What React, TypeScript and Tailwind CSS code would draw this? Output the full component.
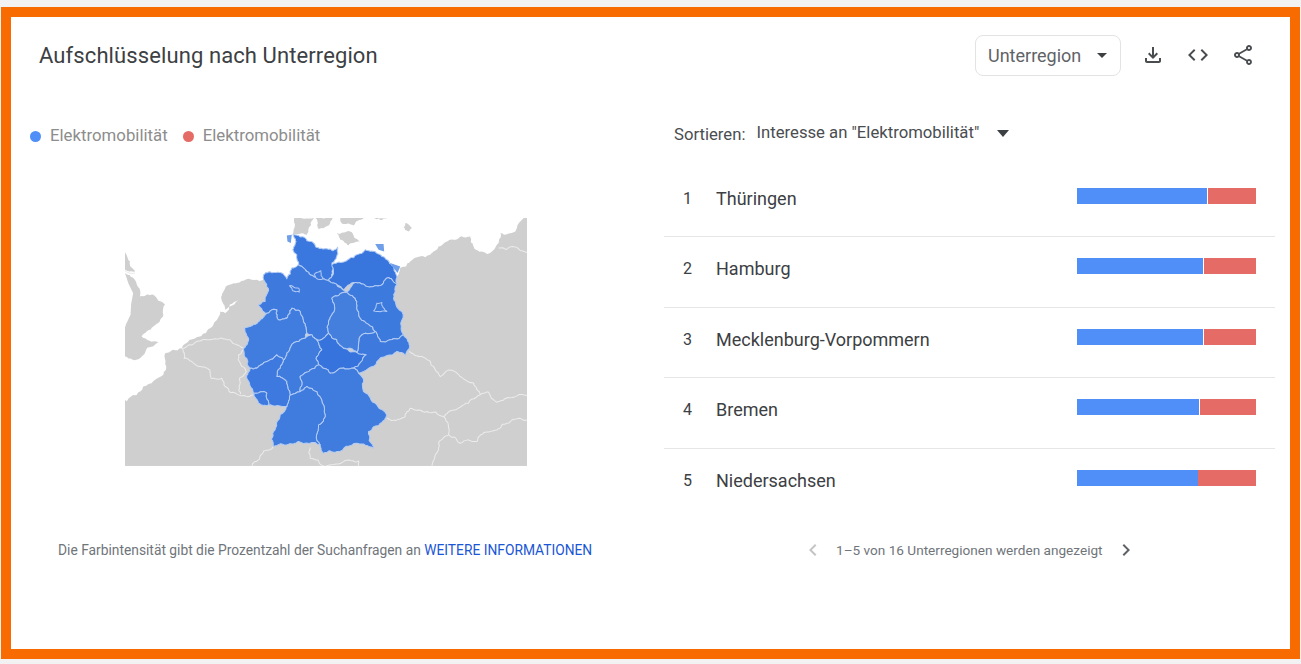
import { MdArrowDropDown, MdChevronLeft, MdChevronRight, MdCode, MdOutlineFileDownload, MdOutlineShare } from "react-icons/md";

const regions = [
  { name: "Thüringen", blue: 130, red: 48 },
  { name: "Hamburg", blue: 126, red: 52 },
  { name: "Mecklenburg-Vorpommern", blue: 126, red: 52 },
  { name: "Bremen", blue: 122, red: 56 },
  { name: "Niedersachsen", blue: 121, red: 58 },
];

const states = [
  { fill: "#3a77de", d: "M548 90L565 92L580 97L590 108L605 110L620 128L650 132L668 138L682 127L680 155L665 175L668 195L665 215L655 228L630 222L610 215L590 200L575 185L565 180L560 150L548 135L555 118Z" },
  { fill: "#3875dd", d: "M665 180L700 172L720 160L740 150L765 135L795 140L815 155L830 165L850 185L860 215L860 240L835 218L815 240L790 245L760 238L735 233L700 255L680 240L655 228L665 215Z" },
  { fill: "#3e7ade", d: "M460 210L495 203L520 208L530 222L545 190L565 180L590 200L610 215L630 222L655 228L680 240L708 262L665 280L672 320L655 350L655 385L620 405L605 390L590 385L580 350L570 320L545 310L530 340L505 345L500 315L470 325L445 300L465 290L472 265L470 240Z" },
  { fill: "#407dde", d: "M402 370L445 350L470 325L500 315L505 345L530 340L545 310L570 320L580 350L590 385L585 400L565 410L545 420L530 445L520 465L500 450L470 470L440 490L420 490L410 460L400 435L415 400Z" },
  { fill: "#3f7cde", d: "M585 400L605 390L620 405L635 435L618 460L625 480L600 495L570 515L570 560L540 570L530 530L500 515L520 465L530 445L545 420L565 410Z" },
  { fill: "#3673dc", d: "M620 405L655 385L680 405L700 430L745 445L768 450L730 490L690 490L660 505L625 480L618 460L635 435Z" },
  { fill: "#447fde", d: "M665 280L708 262L740 290L750 340L795 380L750 395L740 442L700 430L680 405L655 385L655 350L672 320Z" },
  { fill: "#3d7ade", d: "M708 262L735 233L760 238L790 245L815 240L835 218L860 240L850 280L875 320L880 390L840 405L810 410L795 380L750 340L740 290Z" },
  { fill: "#3e7ade", d: "M750 395L795 380L810 410L840 405L880 390L897 430L885 452L860 440L800 470L745 505L730 490L768 450L740 442Z" },
  { fill: "#3f7cde", d: "M570 515L600 495L625 480L660 505L690 490L730 490L745 505L760 560L800 600L830 630L810 655L775 680L790 730L740 715L680 740L640 745L630 720L625 660L645 630L620 560L590 545L570 560Z" },
  { fill: "#3f7cde", d: "M540 570L570 560L590 545L620 560L645 630L625 660L630 720L565 710L535 718L490 725L490 680L510 630L530 605Z" },
  { fill: "#3d79de", d: "M420 490L440 490L470 470L500 450L520 465L500 515L530 530L540 570L530 605L475 600L470 565L430 565L410 520Z" },
  { fill: "#3d79de", d: "M430 565L470 565L475 600L445 595Z" },
  // Bremen, Berlin, Hamburg
  { fill: "#3e7ade", d: "M538 243L565 250L567 262L548 258Z" },
  { fill: "#3d7ade", d: "M790 318L800 295L815 293L830 320Z" },
  { fill: "#3e7ade", d: "M612 208L632 198L638 222L620 222Z" },
];

const borders = [
  "M215 430L222 460L245 470L270 485L300 495L303 520L335 520L345 545L385 570L430 570",
  "M215 430L260 410L300 405L330 400L360 405L380 420L400 430",
  "M400 435L385 450L408 500L388 520L392 568",
  "M897 440L925 455L960 470L975 495L990 515L1015 495L1040 505L1065 525L1090 535L1110 570",
  "M830 640L860 645L885 635L900 610L950 620L1000 635L1030 615L1060 600L1110 570",
  "M1110 570L1135 562L1160 592L1190 578L1250 572",
  "M1000 635L1015 690L1050 715L1100 710L1110 690L1160 675L1200 650L1250 645",
  "M1015 690L985 715L975 750L965 783",
  "M490 725L460 738L445 765L425 783",
  "M600 728L600 760L640 783L700 770L745 768L745 783",
  "M1165 130L1250 143",
  "M45 197L75 205",
];

const sea =
  "M45 40L1240 40L1215 80L1170 85L1165 115L1130 148L1090 125L1080 95L1030 105L985 125L960 150L900 170L870 190L860 215L460 225L440 225L380 235L345 250L335 285L345 315L385 285L345 325L330 320L300 370L270 395L215 430L165 445L160 510L100 545L80 570L50 590L45 585Z";

const britain =
  "M45 140L60 170L75 200L45 195ZM45 205L70 220L90 275L130 270L165 300L160 330L130 365L95 395L145 412L90 460L45 455Z";

const isles =
  "M552 40L612 40L602 62L590 90L548 88ZM615 40L668 40L655 62L625 72ZM690 40L760 40L730 62L695 56ZM680 85L720 80L750 110L715 122L690 105ZM885 55L905 70L895 80L880 68ZM790 40L830 40L815 46Z";

// shared edges get the same wiggle, so neighbouring states still line up
function hash(a: number, b: number, c: number, d: number) {
  const v = Math.sin(a * 12.9898 + b * 78.233 + c * 37.719 + d * 19.19) * 43758.5453;
  return v - Math.floor(v);
}

function splitEdge(x1: number, y1: number, x2: number, y2: number, depth: number): string {
  const len = Math.hypot(x2 - x1, y2 - y1);
  if (depth === 0 || len < 5) return `L${x2.toFixed(1)} ${y2.toFixed(1)}`;
  const flip = x1 > x2 || (x1 === x2 && y1 > y2);
  const [ax, ay, bx, by] = flip ? [x2, y2, x1, y1] : [x1, y1, x2, y2];
  const amount = (hash(ax, ay, bx, by) - 0.5) * len * 0.32;
  const mx = (ax + bx) / 2 - ((by - ay) / len) * amount;
  const my = (ay + by) / 2 + ((bx - ax) / len) * amount;
  return splitEdge(x1, y1, mx, my, depth - 1) + splitEdge(mx, my, x2, y2, depth - 1);
}

function wiggle(d: string) {
  return d
    .split("M")
    .filter(Boolean)
    .map((part) => {
      const closed = part.endsWith("Z");
      const pts = part
        .replace("Z", "")
        .split("L")
        .map((p) => p.trim().split(" ").map(Number));
      if (closed) pts.push(pts[0]);
      let out = `M${pts[0][0]} ${pts[0][1]}`;
      for (let i = 1; i < pts.length; i++) {
        out += splitEdge(pts[i - 1][0], pts[i - 1][1], pts[i][0], pts[i][1], 3);
      }
      return out + (closed ? "Z" : "");
    })
    .join("");
}

function GermanyMap() {
  return (
    <svg viewBox="45 40 1205 743" className="block h-[248px] w-[402px]">
      <rect x="45" y="40" width="1205" height="743" fill="#cfcfcf" />
      <path fill="#fff" d={wiggle(sea)} />
      <path fill="#cfcfcf" d={wiggle(britain)} />
      <path fill="#cfcfcf" d={wiggle(isles)} />
      <g fill="none" stroke="#ececec" strokeWidth="3" strokeLinejoin="round">
        {borders.map((d) => (
          <path key={d} d={wiggle(d)} />
        ))}
      </g>
      <g stroke="#b4ccf4" strokeWidth="3" strokeLinejoin="round">
        {states.map((s) => (
          <path key={s.d} d={wiggle(s.d)} fill={s.fill} />
        ))}
      </g>
      {/* Ruegen, Usedom, Sylt */}
      <path fill="#6f9fe8" d="M795 118L820 118L822 140L805 135ZM840 175L870 185L862 205L850 190ZM530 92L545 90L542 115L532 110Z" />
    </svg>
  );
}

export default function App() {
  return (
    <div className="h-[664px] w-[1301px] overflow-hidden bg-[#f2f2f2] pt-[7px] pl-px font-['Roboto',sans-serif]">
      <div className="h-[652px] w-[1299px] border-[10px] border-[#f76b00] bg-white">
        <div className="flex h-[76px] items-center pr-[35px] pl-[28px]">
          <h2 className="text-[22px] font-normal tracking-[0.1px] text-[#3c4043]">Aufschlüsselung nach Unterregion</h2>
          <div className="ml-auto flex h-[41px] w-[146px] items-center rounded-lg border border-[#e3e3e3] pl-3 text-[18px] text-[#5f6368]">
            Unterregion
            <MdArrowDropDown className="ml-[9px] h-6 w-6 text-[#3c4043]" />
          </div>
          <div className="ml-[20px] flex items-center gap-[21px] text-[#4a4d50]">
            <MdOutlineFileDownload className="h-6 w-6" />
            <MdCode className="h-6 w-6" />
            <MdOutlineShare className="h-6 w-6" />
          </div>
        </div>
        <div className="flex">
          <div className="w-[653px]">
            <div className="mt-[32px] flex h-[22px] items-center pl-[19px] text-[16.8px] text-[#8d8d8d]">
              <span className="h-[11px] w-[11px] rounded-full bg-[#4f8ff7]" />
              <span className="ml-[9px]">Elektromobilität</span>
              <span className="ml-[15px] h-[11px] w-[11px] rounded-full bg-[#e56b66]" />
              <span className="ml-[9px]">Elektromobilität</span>
            </div>
            <div className="mt-[71px] ml-[114px]">
              <GermanyMap />
            </div>
            <div className="mt-[75px] ml-[47px] text-[13.8px] leading-[18px] text-[#70757a]">
              Die Farbintensität gibt die Prozentzahl der Suchanfragen an{" "}
              <span className="text-[#1a56d6]">WEITERE INFORMATIONEN</span>
            </div>
          </div>
          <div className="w-[611px]">
            <div className="mt-[29px] flex h-[22px] items-center pl-[10px] text-[16.7px] text-[#4a4d50]">
              <span className="mt-[3px]">Sortieren:</span>
              <span className="ml-[11px]">Interesse an "Elektromobilität"</span>
              <span className="ml-[18px] h-0 w-0 border-x-[6px] border-t-[7px] border-x-transparent border-t-[#3c4043]" />
            </div>
            <div className="mt-[23px]">
              {regions.map((r, i) => (
                <div key={r.name} className={`flex h-[70.4px] items-start ${i < 4 ? "border-b border-[#e6e6e6]" : ""}`}>
                  <span className="mt-[20px] w-[52px] pl-[19px] text-[16px] leading-6 text-[#3c4043]">{i + 1}</span>
                  <span className="mt-[20px] text-[18px] leading-6 text-[#3c4043]">{r.name}</span>
                  <div className="mt-[21px] mr-[19px] ml-auto flex h-4 w-[179px] justify-between">
                    <div className="h-4 bg-[#4f8ff7]" style={{ width: r.blue }} />
                    <div className="h-4 bg-[#e56b66]" style={{ width: r.red }} />
                  </div>
                </div>
              ))}
            </div>
            <div className="mt-[21px] flex h-5 items-center pl-[137px] text-[13.6px] text-[#70757a]">
              <MdChevronLeft className="h-6 w-6 text-[#c4c4c4]" />
              <span className="mx-[11px]">1–5 von 16 Unterregionen werden angezeigt</span>
              <MdChevronRight className="h-6 w-6 text-[#5f6368]" />
            </div>
          </div>
        </div>
      </div>
    </div>
  );
}
